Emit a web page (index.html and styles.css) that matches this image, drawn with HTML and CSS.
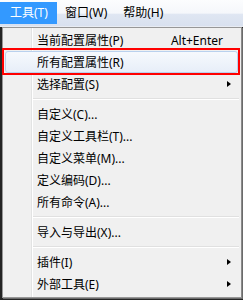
FILE: index.html
```html
<!DOCTYPE html>
<html>
<head>
<meta charset="utf-8">
<link rel="stylesheet" href="styles.css">
</head>
<body>
<div class="menubar">
  <div class="mb-item active">工具(T)</div>
  <div class="mb-item">窗口(W)</div>
  <div class="mb-item">帮助(H)</div>
</div>
<div class="stage">
  <div class="menu">
    <div class="item"><span class="label">当前配置属性(P)</span><span class="shortcut">Alt+Enter</span></div>
    <div class="item hover"><span class="label">所有配置属性(R)</span></div>
    <div class="item"><span class="label">选择配置(S)</span><span class="arrow"></span></div>
    <div class="sep"></div>
    <div class="item"><span class="label">自定义(C)...</span></div>
    <div class="item"><span class="label">自定义工具栏(T)...</span></div>
    <div class="item"><span class="label">自定义菜单(M)...</span></div>
    <div class="item"><span class="label">定义编码(D)...</span></div>
    <div class="item"><span class="label">所有命令(A)...</span></div>
    <div class="sep"></div>
    <div class="item"><span class="label">导入与导出(X)...</span></div>
    <div class="sep"></div>
    <div class="item"><span class="label">插件(I)</span><span class="arrow"></span></div>
    <div class="item"><span class="label">外部工具(E)</span><span class="arrow"></span></div>
  </div>
  <div class="redbox"></div>
</div>
</body>
</html>
```
FILE: styles.css
```css
html, body {
  margin: 0;
  padding: 0;
}
body {
  width: 243px;
  height: 300px;
  overflow: hidden;
  background: #242424;
  font-family: "Noto Sans", "Noto Sans CJK SC", sans-serif;
  font-size: 12px;
  color: #000;
  position: relative;
}
.menubar {
  height: 27px;
  box-sizing: border-box;
  display: flex;
  align-items: center;
  background: linear-gradient(#fcfdfe 0%, #f5f7fb 50%, #dfe6f2 56%, #d9e1ef 100%);
  border-bottom: 1px solid #e8ecf3;
  padding-bottom: 1px;
}
.mb-item {
  height: 22px;
  line-height: 22px;
  padding: 0 8px;
  white-space: nowrap;
}
.mb-item.active {
  background: #3399ff;
  color: #fff;
  padding: 0 9px 0 10px;
}
.stage {
  position: relative;
}
.menu {
  margin-left: 2px;
  width: 240px;
  box-sizing: border-box;
  border: 1px solid #979797;
  border-right-color: #8a8a8a;
  box-shadow: 1px 1px 0 #6b6b6b;
  background-color: #f0f0f0;
  background-image: linear-gradient(to right, transparent 28px, #e2e3e3 28px, #e2e3e3 29px, #ffffff 29px, #ffffff 30px, transparent 30px);
  background-origin: padding-box;
  padding: 1px 2px 2px 2px;
}
.item {
  height: 22px;
  box-sizing: border-box;
  display: flex;
  align-items: center;
  padding-left: 32px;
  white-space: nowrap;
}
.item.hover {
  background: linear-gradient(#f6f9fd, #e7eef8);
  border: 1px solid #b9d1ee;
  border-radius: 3px;
  padding-left: 31px;
  margin-right: 1px;
}
.label {
  flex: 1;
}
.shortcut {
  padding-right: 16px;
}
.arrow {
  width: 0;
  height: 0;
  border-left: 4px solid #000;
  border-top: 3.5px solid transparent;
  border-bottom: 3.5px solid transparent;
  margin-right: 8px;
}
.sep {
  height: 8px;
  box-sizing: border-box;
  margin-left: 28px;
  padding-top: 3px;
}
.sep::before {
  content: "";
  display: block;
  height: 1px;
  background: #e0e0e0;
  border-bottom: 1px solid #ffffff;
}
.redbox {
  position: absolute;
  left: 2px;
  top: 21px;
  width: 238px;
  height: 27px;
  box-sizing: border-box;
  border: 2px solid #ff0000;
}
```
